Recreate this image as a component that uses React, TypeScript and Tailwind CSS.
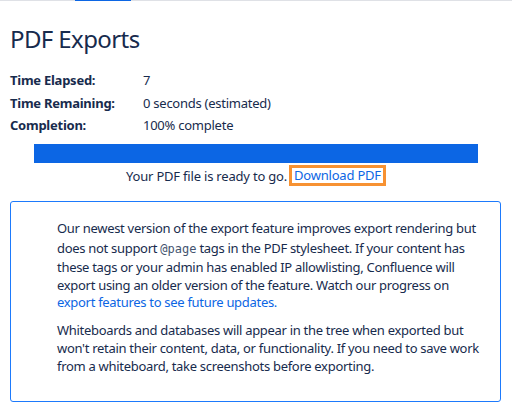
export default function App() {
  const font = { fontFamily: '"Noto Sans", "Open Sans", sans-serif' };
  return (
    <div className="w-[512px] h-[412px] bg-white overflow-hidden text-[#172b4d]" style={font}>
      {/* tab strip underline */}
      <div className="flex h-px bg-[#dfe1e6]">
        <div className="ml-[75px] w-[56px] bg-[#0c66e4]" />
      </div>

      <h1 className="ml-[10px] mt-[22px] text-[24px] leading-[32px] font-normal tracking-[-0.6px]">PDF Exports</h1>

      <div className="ml-[10px] mt-[14px] text-[13px] leading-[22.5px] tracking-[-0.25px]">
        <div className="flex">
          <div className="w-[133px] font-bold">Time Elapsed:</div>
          <div>7</div>
        </div>
        <div className="flex">
          <div className="w-[133px] font-bold">Time Remaining:</div>
          <div>0 seconds (estimated)</div>
        </div>
        <div className="flex">
          <div className="w-[133px] font-bold">Completion:</div>
          <div>100% complete</div>
        </div>
      </div>

      <div className="ml-[34px] mt-[7.5px] w-[444px] h-[19px] bg-[#0c66e4]" />

      <div className="mt-[2px] flex justify-center text-[13px] leading-[20px] tracking-[-0.2px]">
        <span className="pt-[1px]">Your PDF file is ready to go.</span>
        <a className="ml-[2px] px-[2px] border-[3px] border-[#f79232] text-[#0c66e4] leading-[15px]" href="#">
          Download PDF
        </a>
      </div>

      <div className="ml-[10px] mt-[15px] w-[491px] h-[201px] border border-[#1d7afc] rounded-[3px] pl-[46px] pt-[18px] text-[13px] leading-[17.5px] tracking-[-0.3px] whitespace-nowrap">
        <p>
          <span className="block">Our newest version of the export feature improves export rendering but</span>
          <span className="block h-[21.5px] leading-[21.5px]">
            does not support{' '}
            <code className="text-[12px] tracking-normal text-[#44546f]" style={{ fontFamily: '"DejaVu Sans Mono", monospace' }}>@page</code> tags
            in the PDF stylesheet. If your content has
          </span>
          <span className="block">these tags or your admin has enabled IP allowlisting, Confluence will</span>
          <span className="block">export using an older version of the feature. Watch our progress on</span>
          <a className="block text-[#0c66e4]" href="#">export features to see future updates.</a>
        </p>
        <p className="mt-[9.5px] leading-[18px]">
          <span className="block">Whiteboards and databases will appear in the tree when exported but</span>
          <span className="block">won't retain their content, data, or functionality. If you need to save work</span>
          <span className="block">from a whiteboard, take screenshots before exporting.</span>
        </p>
      </div>
    </div>
  );
}
